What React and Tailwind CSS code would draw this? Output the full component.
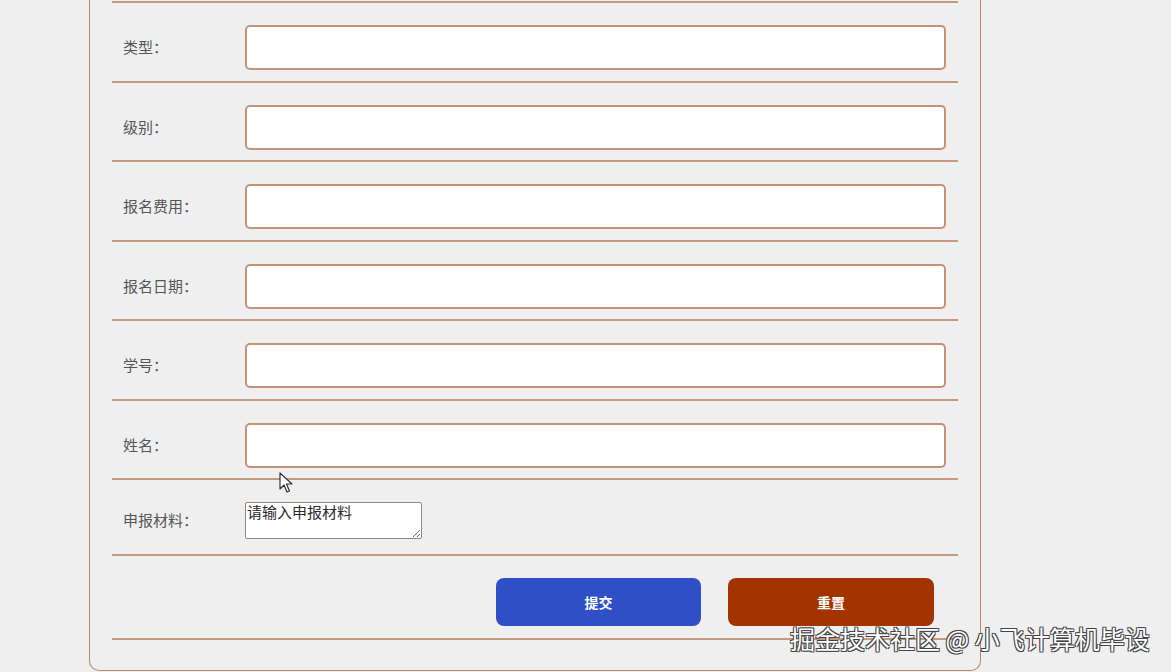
import React from 'react';

const fields = ['类型：', '级别：', '报名费用：', '报名日期：', '学号：', '姓名：'];

function Row({ label }) {
    return (
        <div className="flex items-center h-[79.5px] pt-[22px] pb-[10.5px] border-b-2 border-[#c59a80]">
            <div className="w-[133px] pl-[11px] text-[15px] text-[#555]">{label}</div>
            <input
                type="text"
                className="flex-1 mr-[12px] h-[45px] bg-white border-2 border-[#c29378] rounded-[5px] px-2 outline-none"
            />
        </div>
    );
}

export default function App() {
    return (
        <div
            className="relative w-[1171px] h-[672px] overflow-hidden bg-[#efefef]"
            style={{ fontFamily: '"Noto Sans CJK SC", "Noto Sans", sans-serif' }}
        >
            <div className="ml-[89px] w-[892px] border-x-[1.5px] border-b-[1.5px] border-[#b9846a] rounded-b-[10px] px-[22px] pb-[30px]">
                <div className="h-[3px] border-b-2 border-[#c59a80]" />

                {fields.map((f) => (
                    <Row key={f} label={f} />
                ))}

                {/* 申报材料 */}
                <div className="flex items-center pt-[22px] pb-[15px] border-b-2 border-[#c59a80]">
                    <div className="w-[133px] pl-[11px] text-[15px] text-[#555]">申报材料：</div>
                    <textarea
                        placeholder="请输入申报材料"
                        className="w-[177px] h-[37px] bg-white border border-[#888] rounded-[2px] px-[1px] text-[15px] leading-[18px] placeholder:text-[#2a2a2a] outline-none"
                    />
                </div>

                {/* buttons */}
                <div className="flex justify-end gap-[27px] pr-[24px] pt-[22px] pb-[12px] border-b-2 border-[#c59a80]">
                    <button className="w-[205px] h-[48px] rounded-[8px] bg-[#2f4fc6] text-white text-[14px] font-bold">
                        提交
                    </button>
                    <button className="w-[206px] h-[48px] rounded-[8px] bg-[#a33300] text-white text-[14px] font-bold">
                        重置
                    </button>
                </div>
            </div>

            {/* mouse cursor */}
            <svg className="absolute left-[279px] top-[472px]" width="14" height="22" viewBox="0 0 14 22">
                <path d="M1 1 L1 17 L5 13 L8 20 L10.5 19 L7.5 12 L13 12 Z" fill="#fff" stroke="#333" strokeWidth="1.2" strokeLinejoin="round" />
            </svg>

            {/* watermark */}
            <div className="absolute left-[790px] top-[621px] text-[25px] leading-[34px] text-white whitespace-nowrap [text-shadow:1px_1px_0_#444,-1px_-1px_0_#444,1px_-1px_0_#444,-1px_1px_0_#444]">
                掘金技术社区 @ 小飞计算机毕设
            </div>
        </div>
    );
}
